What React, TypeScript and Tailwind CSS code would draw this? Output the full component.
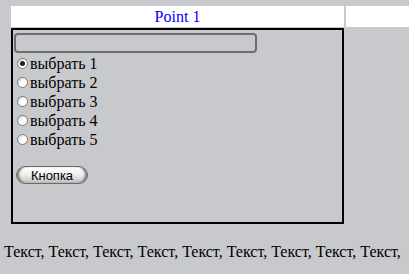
import React from "react";

const serif = { fontFamily: '"Liberation Serif", "Times New Roman", serif' };

function Radio({ checked, label }: { checked?: boolean; label: string }) {
  return (
    <div className="flex items-center h-[19px]">
      <span className="ml-[4px] w-[11px] h-[11px] rounded-full border border-[#7a7a7a] bg-gradient-to-br from-[#d0d0d0] via-white to-white flex items-center justify-center">
        {checked ? <span className="w-[5px] h-[5px] rounded-full bg-[#222]" /> : null}
      </span>
      <span className="ml-[2px] text-[16px] leading-[19px] text-black">{label}</span>
    </div>
  );
}

export default function App() {
  return (
    <div
      className="w-[409px] h-[274px] bg-[#c8c9cc] overflow-hidden text-black font-['Liberation_Serif',_'Times_New_Roman',_serif]"
      style={serif}
    >
      <div className="pt-[6px] pl-[11px]">
        <div className="flex gap-[2px]">
          <div className="w-[333px] h-[21px] bg-white flex items-center justify-center text-[16px] text-[#0000ff]">
            Point 1
          </div>
          <div className="flex-1 h-[21px] bg-white" />
        </div>
        <div className="flex gap-[2px] mt-[1px]">
          <div className="w-[333px] h-[196px] border-2 border-black flex flex-col">
            <div className="ml-[1px] mt-[3px] w-[243px] h-[20px] rounded-[4px] border-2 border-[#6e6e6e] bg-[#c8c9cc]" />
            <div className="mt-[1px] flex flex-col">
              <Radio checked label="выбрать 1" />
              <Radio label="выбрать 2" />
              <Radio label="выбрать 3" />
              <Radio label="выбрать 4" />
              <Radio label="выбрать 5" />
            </div>
            <button
              className="ml-[3px] mt-[17px] w-[72px] h-[18px] rounded-full border border-[#6a6a6a] bg-gradient-to-b from-white via-[#eeeeee] to-[#bdbdbd] flex items-center justify-center text-[13px] leading-none text-black shadow-[inset_3px_0_2px_-1px_#777,inset_-3px_0_2px_-1px_#777]"
              style={{ fontFamily: '"Liberation Sans", Arial, sans-serif' }}
            >
              Кнопка
            </button>
          </div>
          <div className="flex-1" />
        </div>
      </div>
      <div className="mt-[19px] pl-[4px] whitespace-nowrap text-[16px] leading-[18px]">
        Текст, Текст, Текст, Текст, Текст, Текст, Текст, Текст, Текст,
      </div>
    </div>
  );
}
